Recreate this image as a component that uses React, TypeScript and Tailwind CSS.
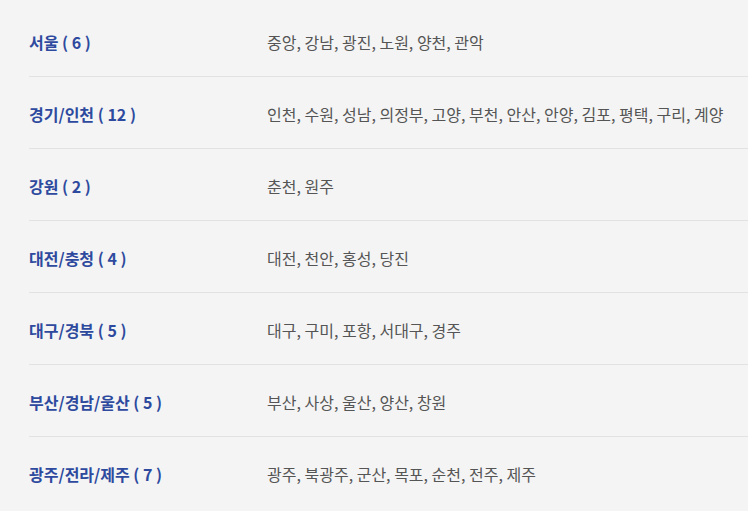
import React from "react";

const REGIONS: { name: string; count: number; branches: string[] }[] = [
    { name: "서울", count: 6, branches: ["중앙", "강남", "광진", "노원", "양천", "관악"] },
    {
        name: "경기/인천",
        count: 12,
        branches: ["인천", "수원", "성남", "의정부", "고양", "부천", "안산", "안양", "김포", "평택", "구리", "계양"],
    },
    { name: "강원", count: 2, branches: ["춘천", "원주"] },
    { name: "대전/충청", count: 4, branches: ["대전", "천안", "홍성", "당진"] },
    { name: "대구/경북", count: 5, branches: ["대구", "구미", "포항", "서대구", "경주"] },
    { name: "부산/경남/울산", count: 5, branches: ["부산", "사상", "울산", "양산", "창원"] },
    { name: "광주/전라/제주", count: 7, branches: ["광주", "북광주", "군산", "목포", "순천", "전주", "제주"] },
];

export default function App() {
    return (
        <div
            className="w-[748px] h-[511px] overflow-hidden bg-[#f4f4f4] pt-[5px] pl-[29px]"
            style={{ fontFamily: '"Noto Sans CJK KR", "Noto Sans", sans-serif' }}
        >
            {REGIONS.map((region, index) => (
                <div
                    key={index}
                    className="flex items-center h-[72px] pt-[2px] border-b border-[#e2e2e2] last:border-b-0 text-[16px]"
                >
                    <span className="w-[238px] shrink-0 font-bold text-[#2e4a9e]">
                        {region.name} ( {region.count} )
                    </span>
                    <span className="text-[#555555] whitespace-nowrap">{region.branches.join(", ")}</span>
                </div>
            ))}
        </div>
    );
}
